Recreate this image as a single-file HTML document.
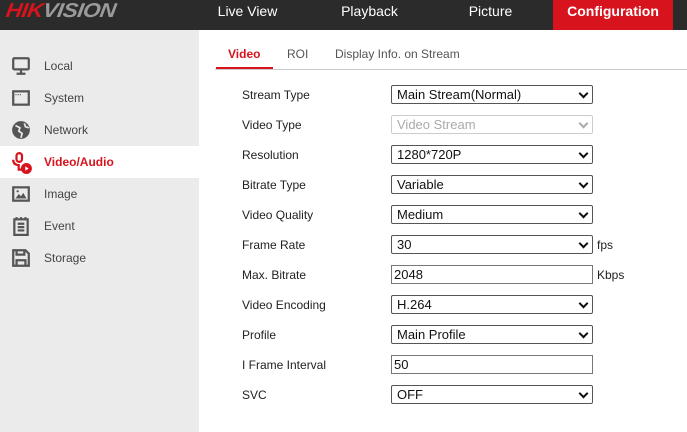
<!DOCTYPE html>
<html><head><style>
*{margin:0;padding:0;box-sizing:border-box}
body{width:687px;height:432px;overflow:hidden;background:#fff;font-family:"Liberation Sans",sans-serif;position:relative}
.hdr{position:absolute;left:0;top:0;width:687px;height:30px;background:#2b2b2b}
.logo{position:absolute;left:6px;top:0px;font-size:20px;font-weight:bold;font-style:italic;letter-spacing:-0.5px;transform:scaleX(1.12) skewX(-8deg);transform-origin:left}
.nav{position:absolute;top:0;height:30px;line-height:22px;color:#fff;font-size:14px;text-align:center}
.side{position:absolute;left:0;top:30px;width:199px;height:402px;background:#ebebeb}
.it{position:absolute;left:0;width:199px;height:32px;font-size:12px;color:#444;line-height:32px;padding-left:44px}
.it svg{position:absolute;left:11px;top:6px}
.sel{background:#fff;color:#d7141d;font-weight:bold}
.tab{position:absolute;top:47px;font-size:12px;color:#555}
.lbl{position:absolute;left:242px;font-size:12px;color:#222}
.box{position:absolute;left:391px;width:202px;height:19px;border:1px solid #555;border-radius:2px;font-size:13px;padding-left:5px;line-height:17px;color:#111}
.box.s::after{content:"";position:absolute;right:5px;top:4px;width:5px;height:5px;border-right:2px solid #111;border-bottom:2px solid #111;transform:rotate(45deg)}
.box.d{border-color:#ccc;color:#aaa}
.box.d::after{border-color:#aaa}
.box.i{border-color:#777;border-radius:0;padding-left:2px}
.unit{position:absolute;left:597px;font-size:12px;color:#222}
</style></head><body>
<div class="hdr">
<div class="logo"><span style="color:#d7141d">HIK</span><span style="color:#9a9a9a">VISION</span></div>
<div class="nav" style="left:200px;width:95px">Live View</div>
<div class="nav" style="left:322px;width:95px">Playback</div>
<div class="nav" style="left:443px;width:95px">Picture</div>
<div class="nav" style="left:553px;width:120px;background:#d7141d;font-weight:bold">Configuration</div>
</div>
<div class="side">
<div class="it" style="top:20px"><svg width="20" height="20" viewBox="0 0 18 18" fill="none" stroke="#555" stroke-width="2"><rect x="2" y="2" width="14" height="10" rx="1"/><path d="M9 12v3M5 16h8"/></svg>Local</div>
<div class="it" style="top:52px"><svg width="20" height="20" viewBox="0 0 18 18" fill="none" stroke="#555" stroke-width="2"><rect x="2" y="3" width="14" height="12"/><path d="M4 6h5" stroke-width="1" stroke-dasharray="1 1"/></svg>System</div>
<div class="it" style="top:84px"><svg width="20" height="20" viewBox="0 0 18 18"><circle cx="9" cy="9" r="8" fill="#555"/><path d="M4 5l4 2-1 3 3 2-1 4M12 3l1 3 3 1" stroke="#ebebeb" stroke-width="1.5" fill="none"/></svg>Network</div>
<div class="it sel" style="top:116px"><svg width="22" height="22" viewBox="0 0 20 20" fill="none" stroke="#d7141d" stroke-width="2"><rect x="5" y="1" width="5" height="8" rx="2.5"/><path d="M2 7c0 4 3 5 6 5M7 12v4h4"/><circle cx="14" cy="15" r="4" fill="#d7141d"/><path d="M13 13l3 2-3 2z" fill="#fff" stroke="none"/></svg>Video/Audio</div>
<div class="it" style="top:148px"><svg width="20" height="20" viewBox="0 0 18 18"><rect x="2" y="3" width="14" height="12" fill="none" stroke="#555" stroke-width="2"/><path d="M4 13l3-4 2 2 2-3 3 5z" fill="#555"/><circle cx="6" cy="6.5" r="1" fill="#555"/></svg>Image</div>
<div class="it" style="top:180px"><svg width="20" height="20" viewBox="0 0 18 18" fill="none" stroke="#555" stroke-width="2"><rect x="3" y="3" width="12" height="14"/><path d="M6 7h6M6 10h6M6 13h6M5 1v2M9 1v2M13 1v2"/></svg>Event</div>
<div class="it" style="top:212px"><svg width="20" height="20" viewBox="0 0 18 18" fill="none" stroke="#555" stroke-width="2"><path d="M2 2h11l3 3v11H2z"/><path d="M5 2v4h7V2M5 16v-5h8v5"/></svg>Storage</div>
</div>
<div class="tab" style="left:228px;color:#d7141d;font-weight:bold">Video</div>
<div class="tab" style="left:287px">ROI</div>
<div class="tab" style="left:335px">Display Info. on Stream</div>
<div style="position:absolute;left:215px;top:69px;width:472px;height:1px;background:#ccc"></div>
<div style="position:absolute;left:216px;top:67px;width:57px;height:2px;background:#d7141d"></div>

<div class="lbl" style="top:88px">Stream Type</div><div class="box s" style="top:85px">Main Stream(Normal)</div>
<div class="lbl" style="top:118px">Video Type</div><div class="box s d" style="top:115px">Video Stream</div>
<div class="lbl" style="top:148px">Resolution</div><div class="box s" style="top:145px">1280*720P</div>
<div class="lbl" style="top:178px">Bitrate Type</div><div class="box s" style="top:175px">Variable</div>
<div class="lbl" style="top:208px">Video Quality</div><div class="box s" style="top:205px">Medium</div>
<div class="lbl" style="top:238px">Frame Rate</div><div class="box s" style="top:235px">30</div><div class="unit" style="top:238px">fps</div>
<div class="lbl" style="top:268px">Max. Bitrate</div><div class="box i" style="top:265px">2048</div><div class="unit" style="top:268px">Kbps</div>
<div class="lbl" style="top:298px">Video Encoding</div><div class="box s" style="top:295px">H.264</div>
<div class="lbl" style="top:328px">Profile</div><div class="box s" style="top:325px">Main Profile</div>
<div class="lbl" style="top:358px">I Frame Interval</div><div class="box i" style="top:355px">50</div>
<div class="lbl" style="top:388px">SVC</div><div class="box s" style="top:385px">OFF</div>
</body></html>
